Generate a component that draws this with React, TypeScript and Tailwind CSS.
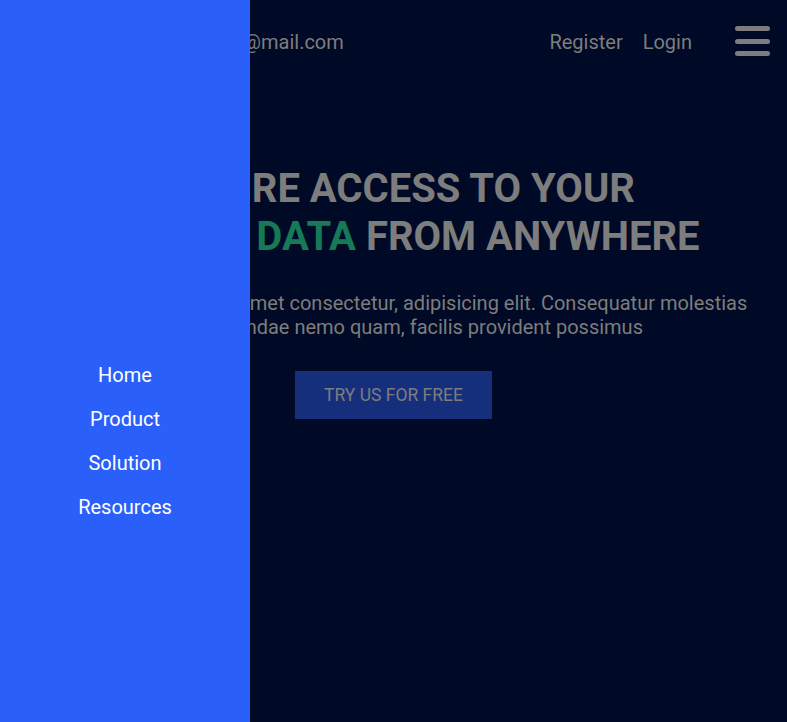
import { useState } from "react";

const links = ["Home", "Product", "Solution", "Resources"];

const App = () => {
  const [open] = useState(true);
  return (
    <div className="relative min-h-[722px] w-full overflow-hidden bg-[#000a26] font-['Roboto',sans-serif]">
      <header className="flex items-center justify-between py-[25px] pl-[174px] pr-[17px]">
        <span className="mt-[2px] text-[20px] text-[#7d7d7d]">support@mail.com</span>
        <div className="flex items-center">
          <a className="mr-[20px] mt-[2px] text-[20px] text-[#7d7d7d]">Register</a>
          <a className="mt-[2px] text-[20px] text-[#7d7d7d]">Login</a>
          <button className="ml-[43px] flex flex-col gap-[7.5px]">
            <span className="block h-[5px] w-[35px] rounded-full bg-[#7d7d7d]" />
            <span className="block h-[5px] w-[35px] rounded-full bg-[#7d7d7d]" />
            <span className="block h-[5px] w-[35px] rounded-full bg-[#7d7d7d]" />
          </button>
        </div>
      </header>

      <section className="mt-[83px] flex flex-col items-center px-6">
        <h1 className="text-center text-[40px] font-bold uppercase leading-[48px] text-[#7d7d7d]">
          Secure access to your
          <br />
          <span className="tracking-[-1px]">Finance</span> <span className="text-[#157a55]">data</span> from anywhere
        </h1>
        <p className="mt-[30px] max-w-[720px] text-center text-[20px] leading-[24px] text-[#7d7d7d]">
          Lorem ipsum dolor sit amet consectetur, adipisicing elit. Consequatur molestias ipsa repellendae nemo quam, facilis provident possimus
        </p>
        <button className="mt-[32px] h-[48px] w-[197px] bg-[#162f7d] text-[17.5px] uppercase text-[#7d7d7d]">
          Try us for free
        </button>
      </section>

      {open && (
        <nav className="absolute inset-y-0 left-0 flex w-[250px] flex-col items-center justify-center gap-[18px] bg-[#2b5ffa] pt-[160px]">
          {links.map((link) => (
            <a key={link} className="text-[20px] leading-[26px] text-white">
              {link}
            </a>
          ))}
        </nav>
      )}
    </div>
  );
};

export default App;
